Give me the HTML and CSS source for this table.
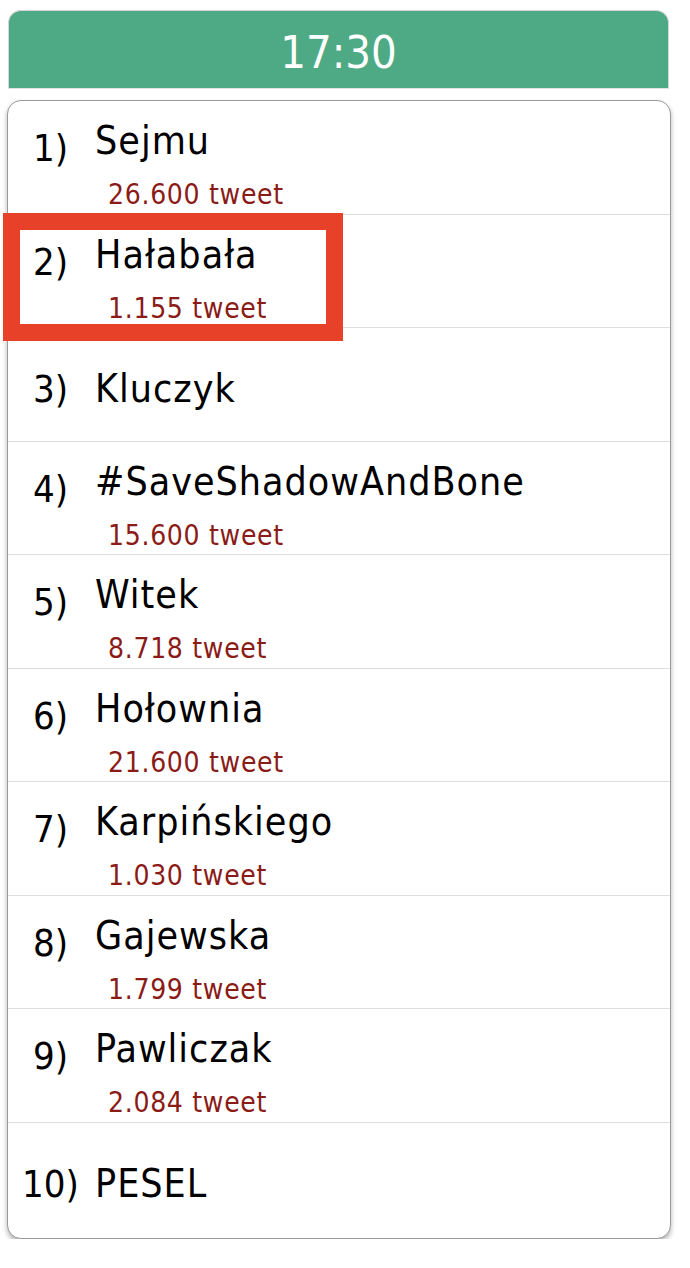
FILE: index.html
```html
<!DOCTYPE html>
<html lang="pl">
<head>
<meta charset="utf-8">
<title>Trendy 17:30</title>
<link rel="stylesheet" href="styles.css">
</head>
<body>
<div class="page">
  <div class="header">17:30</div>
  <div class="card">
    <div class="row"><div class="num">1)</div><div class="body"><div class="name">Sejmu</div><div class="count">26.600 tweet</div></div></div>
    <div class="row row--marked"><div class="num">2)</div><div class="body"><div class="name">Hałabała</div><div class="count">1.155 tweet</div></div><div class="highlight"></div></div>
    <div class="row row--single"><div class="num">3)</div><div class="body"><div class="name">Kluczyk</div></div></div>
    <div class="row"><div class="num">4)</div><div class="body"><div class="name">#SaveShadowAndBone</div><div class="count">15.600 tweet</div></div></div>
    <div class="row"><div class="num">5)</div><div class="body"><div class="name">Witek</div><div class="count">8.718 tweet</div></div></div>
    <div class="row"><div class="num">6)</div><div class="body"><div class="name">Hołownia</div><div class="count">21.600 tweet</div></div></div>
    <div class="row"><div class="num">7)</div><div class="body"><div class="name">Karpińskiego</div><div class="count">1.030 tweet</div></div></div>
    <div class="row"><div class="num">8)</div><div class="body"><div class="name">Gajewska</div><div class="count">1.799 tweet</div></div></div>
    <div class="row"><div class="num">9)</div><div class="body"><div class="name">Pawliczak</div><div class="count">2.084 tweet</div></div></div>
    <div class="row row--single row--last"><div class="num">10)</div><div class="body"><div class="name">PESEL</div></div></div>
  </div>
</div>
</body>
</html>
```
FILE: styles.css
```css
html, body {
  margin: 0;
  padding: 0;
  background: #ffffff;
}
body {
  font-family: "DejaVu Sans Condensed", "DejaVu Sans", "Liberation Sans", sans-serif;
  color: #000;
}
.page {
  padding-top: 10px;
}
.header {
  box-sizing: border-box;
  margin-left: 8px;
  width: 661px;
  height: 79px;
  padding-top: 5px;
  line-height: 74px;
  background: #4eaa84;
  border: 1px solid #d6d6d6;
  border-bottom-color: #e2e2e2;
  border-radius: 13px 13px 0 0;
  color: #ffffff;
  font-size: 45px;
  text-align: center;
}
.card {
  box-sizing: border-box;
  margin-left: 7px;
  margin-top: 11px;
  width: 664px;
  background: #fff;
  border: 1px solid #9a9a9a;
  border-radius: 14px;
  box-shadow: 0 3px 5px rgba(0, 0, 0, 0.3);
}
.row {
  position: relative;
  display: grid;
  grid-template-columns: 85px 1fr;
  box-sizing: border-box;
  height: 113.5px;
  border-bottom: 1px solid #dedede;
}
.row--last {
  height: 115px;
  border-bottom: none;
}
.num {
  padding-top: 24px;
  font-size: 38px;
  line-height: 46px;
  text-align: center;
  white-space: nowrap;
}
.body {
  padding-top: 17px;
}
.row--single .num,
.row--single .body {
  padding-top: 38px;
}
.name {
  padding-left: 2px;
  font-size: 39px;
  line-height: 46px;
  letter-spacing: 1px;
  white-space: nowrap;
}
.count {
  margin-top: 14px;
  padding-left: 15px;
  font-size: 28px;
  line-height: 34px;
  letter-spacing: 0.7px;
  color: #8a1b17;
  white-space: nowrap;
}
.highlight {
  position: absolute;
  left: -5px;
  top: -2px;
  width: 340px;
  height: 128px;
  box-sizing: border-box;
  border: 17px solid #e8412a;
  pointer-events: none;
}
```
